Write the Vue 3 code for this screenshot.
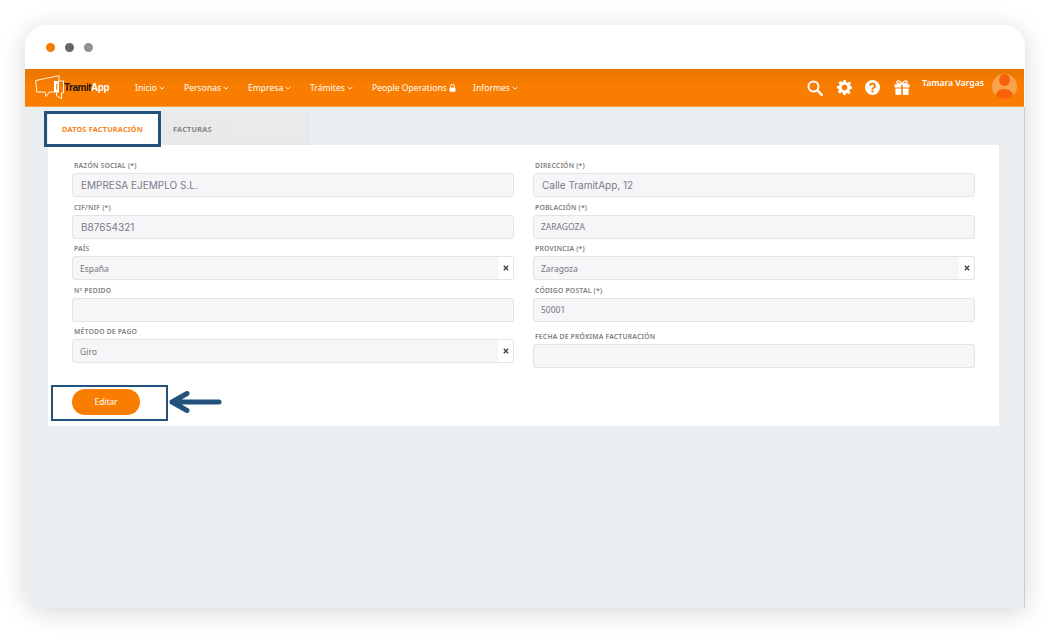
<script setup>
const menu = [
  { label: 'Inicio', width: 49 },
  { label: 'Personas', width: 64 },
  { label: 'Empresa', width: 62 },
  { label: 'Trámites', width: 62 },
  { label: 'People Operations', width: 101, lock: true },
  { label: 'Informes', width: 60 }
]

const leftFields = [
  { label: 'RAZÓN SOCIAL (*)', value: 'EMPRESA EJEMPLO S.L.', big: true },
  { label: 'CIF/NIF (*)', value: 'B87654321', big: true },
  { label: 'PAÍS', value: 'España', clear: true },
  { label: 'Nº PEDIDO', value: '' },
  { label: 'MÉTODO DE PAGO', value: 'Giro', clear: true }
]

const rightFields = [
  { label: 'DIRECCIÓN (*)', value: 'Calle TramitApp, 12', big: true },
  { label: 'POBLACIÓN (*)', value: 'ZARAGOZA' },
  { label: 'PROVINCIA (*)', value: 'Zaragoza', clear: true },
  { label: 'CÓDIGO POSTAL (*)', value: '50001' },
  { label: 'FECHA DE PRÓXIMA FACTURACIÓN', value: '', late: true }
]

const columns = [leftFields, rightFields]
</script>

<template>
  <div class="page">
    <div class="window">
      <div class="titlebar">
        <span class="dot orange"></span>
        <span class="dot dark"></span>
        <span class="dot grey"></span>
      </div>

      <header class="nav">
        <div class="logo">
          <svg width="30" height="25" viewBox="0 0 30 25" fill="none">
            <path d="M24 6 V0.700 L0.700 5.500 L1.800 17 H10 L11 21.500 L14.500 17 H19" stroke="#fff" stroke-width="0.900" stroke-linejoin="round" />
            <path d="M19 6 H24 V17.500 H19 Z" fill="#fff" />
            <path d="M24 6 H28.500 V17.800 H26.500 V23.800 L21.500 20.500 V17.500" stroke="#fff" stroke-width="0.900" stroke-linejoin="round" />
            <path d="M21 9 H23 V10 H22 V11.500 H23 V12.500 H22 V15 H21 Z" fill="#f79a3c" />
          </svg>
          <span class="logo-text"><b>Tramit</b><i>App</i></span>
        </div>

        <nav class="menu">
          <a v-for="item in menu" :key="item.label" class="menu-item" :style="{ width: item.width + 'px' }">
            {{ item.label }}
            <svg v-if="item.lock" width="7" height="8" viewBox="0 0 7 8">
              <path d="M1.500 3.500 V2.400 A2 2 0 0 1 5.500 2.400 V3.500" fill="none" stroke="#fff" stroke-width="1" />
              <rect x="0.500" y="3.400" width="6" height="4.400" rx="0.700" fill="#fff" />
            </svg>
            <svg v-else width="6" height="4" viewBox="0 0 6 4">
              <path d="M0.600 0.800 L3 3.100 L5.400 0.800" fill="none" stroke="#fff" stroke-width="0.900" />
            </svg>
          </a>
        </nav>

        <div class="tools">
          <svg width="16" height="16" viewBox="0 0 16 16" fill="none">
            <circle cx="6.500" cy="6.500" r="5" stroke="#fff" stroke-width="2" />
            <path d="M10.300 10.300 L14.800 14.800" stroke="#fff" stroke-width="2.400" stroke-linecap="round" />
          </svg>
          <svg width="15" height="15" viewBox="0 0 24 24">
            <path fill="#fff" fill-rule="evenodd" d="M10 0h4l.7 3.400 2.200.9 2.900-1.900 2.800 2.800-1.900 2.900.9 2.200L24 10v4l-3.400.7-.9 2.200 1.900 2.900-2.800 2.800-2.900-1.900-2.200.9L14 24h-4l-.7-3.400-2.200-.9-2.900 1.900-2.800-2.800 1.900-2.900-.9-2.200L0 14v-4l3.400-.7.9-2.200-1.900-2.900 2.800-2.800 2.900 1.900 2.200-.9zM12 7.500a4.500 4.500 0 1 0 0 9 4.500 4.500 0 0 0 0-9z" />
          </svg>
          <svg width="15" height="15" viewBox="0 0 15 15">
            <circle cx="7.500" cy="7.500" r="7.500" fill="#fff" />
            <path d="M5 5.800 A2.500 2.300 0 1 1 8.600 7.900 Q7.500 8.400 7.500 9.400" fill="none" stroke="#f57c00" stroke-width="1.800" />
            <rect x="6.500" y="10.400" width="2" height="2" fill="#f57c00" />
          </svg>
          <svg width="16" height="15" viewBox="0 0 16 15">
            <path d="M8 4 C6 0 2.500 0 3 2.500 C3.300 4 6 4 8 4 C10 4 12.700 4 13 2.500 C13.500 0 10 0 8 4 Z" fill="none" stroke="#fff" stroke-width="1.300" />
            <path fill="#fff" d="M0.500 4.300 H7.200 V7.400 H0.500 Z M8.800 4.300 H15.500 V7.400 H8.800 Z M1.400 8.600 H7.200 V14.700 H1.400 Z M8.800 8.600 H14.600 V14.700 H8.800 Z" />
          </svg>
        </div>

        <span class="user-name">Tamara Vargas</span>
        <div class="avatar">
          <span class="avatar-head"></span>
          <span class="avatar-body"></span>
        </div>
      </header>

      <main class="content">
        <div class="tabs">
          <div class="tab active">
            DATOS FACTURACIÓN
            <span class="mark tab-mark"></span>
          </div>
          <div class="tab">
            FACTURAS
            <span class="tab-ghost"></span>
          </div>
        </div>

        <section class="card">
          <div class="grid">
            <div v-for="(col, i) in columns" :key="i" class="col">
              <div v-for="f in col" :key="f.label" class="field" :class="{ late: f.late }">
                <label>{{ f.label }}</label>
                <div class="input" :class="{ big: f.big }">
                  <span>{{ f.value }}</span>
                  <span v-if="f.clear" class="clear">
                    <svg width="6" height="6" viewBox="0 0 6 6">
                      <path d="M0.800 0.800 L5.200 5.200 M5.200 0.800 L0.800 5.200" stroke="#444" stroke-width="1.400" />
                    </svg>
                  </span>
                </div>
              </div>
            </div>
          </div>

          <div class="actions">
            <button class="edit">Editar</button>
            <span class="mark edit-mark"></span>
            <svg class="arrow" width="56" height="24" viewBox="0 0 56 24" fill="none">
              <path d="M3 12 H50 M18 3.500 L3 12 L18 20.500" stroke="#23527c" stroke-width="5" stroke-linecap="round" stroke-linejoin="round" />
            </svg>
          </div>
        </section>
      </main>
    </div>
  </div>
</template>

<style>
html,
body {
  margin: 0;
  background: #fff;
}
</style>

<style scoped>
.page {
  width: 1061px;
  height: 633px;
  padding: 25px 36px 25px 25px;
  box-sizing: border-box;
  overflow: hidden;
  font-family: "Noto Sans", "Open Sans", sans-serif;
}

.window {
  width: 1000px;
  height: 583px;
  display: flex;
  flex-direction: column;
  background: #fff;
  border-radius: 22px 22px 0 22px;
  overflow: hidden;
  box-shadow: 0 4px 26px rgba(0, 0, 0, 0.16);
}

.titlebar {
  height: 44px;
  flex: none;
  display: flex;
  align-items: center;
  gap: 10px;
  padding: 1px 0 0 21px;
  box-sizing: border-box;
  background: #fff;
}

.dot {
  width: 9px;
  height: 9px;
  border-radius: 50%;
}

.orange { background: #f57c00; }
.dark { background: #676767; }
.grey { background: #929292; }

.nav {
  height: 38px;
  margin-right: 1px;
  flex: none;
  display: flex;
  align-items: center;
  padding: 0 7px 0 10px;
  box-sizing: border-box;
  background: linear-gradient(#e97600, #f97d00 45%);
  border-bottom: 1px solid #fb9c3e;
  color: #fff;
}

.logo {
  width: 100px;
  flex: none;
  display: flex;
  align-items: center;
}

.logo-text {
  display: inline-block;
  margin: -2px 0 0 -1px;
  font-family: "Liberation Sans", sans-serif;
  font-size: 11.500px;
  font-weight: 700;
  letter-spacing: -0.500px;
  transform: scaleX(0.86);
  transform-origin: left center;
}

.logo-text b { color: #1d1206; }
.logo-text i { color: #fff; font-style: normal; }

.menu {
  display: flex;
  flex: none;
}

.menu-item {
  display: flex;
  align-items: center;
  gap: 2px;
  font-size: 8.600px;
  white-space: nowrap;
}

.tools {
  margin-left: auto;
  width: 103px;
  flex: none;
  display: flex;
  justify-content: space-between;
  align-items: center;
}

.user-name {
  margin: -10px 0 0 12px;
  width: 70px;
  flex: none;
  font-size: 8.600px;
  font-weight: 600;
  white-space: nowrap;
}

.avatar {
  position: relative;
  width: 25px;
  height: 25px;
  margin-top: -2px;
  flex: none;
  overflow: hidden;
  border-radius: 50%;
  background: #f8a34b;
}

.avatar-head {
  position: absolute;
  top: 0;
  left: 7px;
  width: 11px;
  height: 12px;
  border-radius: 50%;
  background: #f9620a;
}

.avatar-body {
  position: absolute;
  top: 15px;
  left: 4px;
  width: 17px;
  height: 12px;
  border-radius: 50%;
  background: #f9620a;
}

.content {
  flex: 1;
  padding: 6px 25px 0 23px;
  background: #ebeef1;
  border-right: 1px solid #cbcbcb;
}

.tabs {
  display: flex;
  height: 32px;
}

.tab {
  position: relative;
  display: flex;
  align-items: center;
  font-size: 7.300px;
  font-weight: 700;
  letter-spacing: 0.200px;
  color: #858585;
  background: #e9e9e9;
  width: 137px;
  padding-left: 14px;
}

.tab.active {
  width: 97px;
  z-index: 1;
  color: #f58420;
  background: #fff;
}

/* faint patch inside the second tab */
.tab-ghost {
  position: absolute;
  top: 6px;
  left: 72px;
  width: 71px;
  height: 15px;
  background: #eaeaea;
}

.mark {
  position: absolute;
  border: 3px solid #23527c;
  box-sizing: border-box;
}

.tab-mark {
  top: -2px;
  left: -4px;
  width: 117px;
  height: 36px;
}

.card {
  height: 281px;
  padding: 15px 24px 0;
  box-sizing: border-box;
  background: #fff;
}

.grid {
  display: grid;
  grid-template-columns: 442px 442px;
  column-gap: 19px;
}

.field {
  height: 41.500px;
}

.field.late {
  padding-top: 5px;
}

.field label {
  display: block;
  height: 13px;
  padding-left: 2px;
  font-size: 6.800px;
  font-weight: 600;
  line-height: 12px;
  letter-spacing: 0.200px;
  color: #808080;
}

.input {
  height: 24px;
  display: flex;
  align-items: center;
  justify-content: space-between;
  padding-left: 7px;
  box-sizing: border-box;
  background: #f6f6f8;
  border: 1px solid #e3e4e6;
  border-radius: 3px;
  font-size: 8.500px;
  color: #74757a;
}

.input.big {
  padding-left: 8px;
  font-family: Inter, Roboto, sans-serif;
  font-size: 10px;
  color: #7a7a8a;
}

.clear {
  width: 15px;
  height: 22px;
  display: flex;
  align-items: center;
  justify-content: center;
  background: #fff;
  border-radius: 0 3px 3px 0;
}

.actions {
  position: relative;
  margin-top: 16px;
}

.edit {
  display: block;
  width: 68px;
  height: 26px;
  border: 0;
  border-radius: 13px;
  background: #f97d00;
  color: #fff;
  font-family: "Noto Sans", sans-serif;
  font-size: 8.300px;
}

.edit-mark {
  top: -4px;
  left: -21px;
  width: 117px;
  height: 36px;
  border-width: 2px;
}

.arrow {
  position: absolute;
  top: 1px;
  left: 97px;
}
</style>
